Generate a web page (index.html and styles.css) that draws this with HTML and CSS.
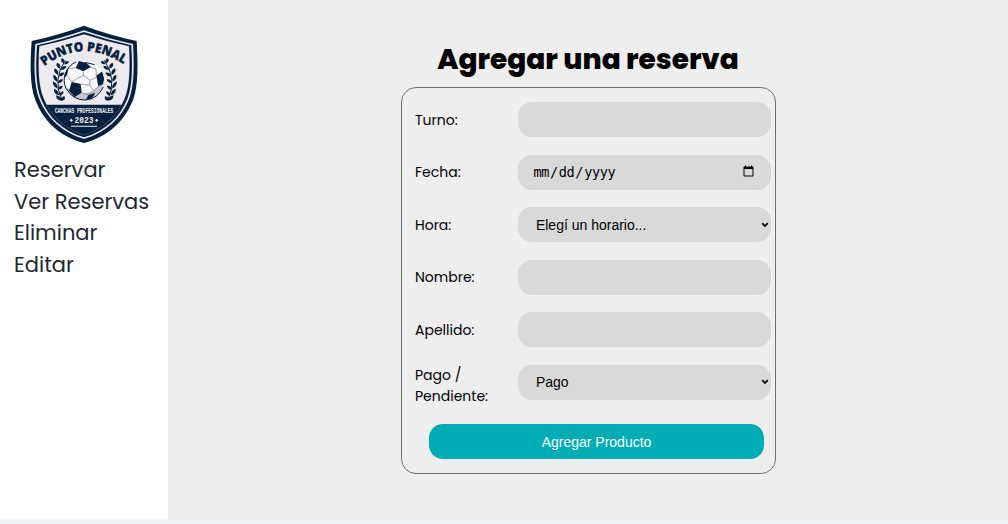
FILE: index.html
```html
<!DOCTYPE html>
<html lang="es">
<head>
<meta charset="utf-8">
<title>Punto Penal</title>
<link rel="stylesheet" href="styles.css">
</head>
<body>
<div class="layout">
  <aside class="sidebar">
    <svg class="logo" viewBox="0 0 390 405" role="img" aria-label="Punto Penal">
      <defs>
        <path id="name-arc" d="M73 153Q192 64 318 153"/>
        <clipPath id="ball-clip"><circle cx="192" cy="196" r="60"/></clipPath>
        <clipPath id="inner-clip"><path d="M192 58Q257 79 327 94C330 150 331 214 313 253C290 307 249 342 192 360C135 342 94 307 72 253C54 214 54 150 58 94Q128 79 192 58Z"/></clipPath>
        <g id="laurel" fill="#06203f">
          <path d="M137 136Q97 193 127 256" fill="none" stroke="#06203f" stroke-width="3"/>
          <path d="M132 145Q119 140 127 130Q138 134 132 145ZM134 148Q136 136 147 138Q147 149 134 148Z"/>
          <path d="M121 161Q106 154 112 143Q126 147 121 161ZM123 165Q127 151 140 153Q138 165 123 165Z"/>
          <path d="M115 180Q99 171 105 160Q119 166 115 180ZM116 184Q121 170 134 173Q131 185 116 184Z"/>
          <path d="M112 200Q96 190 102 179Q116 186 112 200ZM113 204Q118 190 130 193Q128 205 113 204Z"/>
          <path d="M113 221Q97 212 100 199Q116 207 113 221ZM114 224Q117 211 129 212Q128 224 114 224Z"/>
          <path d="M118 241Q101 236 103 221Q118 226 118 241ZM119 242Q119 230 131 229Q133 240 119 242Z"/>
          <path d="M127 257Q110 257 109 241Q124 244 127 257ZM127 257Q122 246 134 243Q140 255 127 257Z"/>
        </g>
      </defs>
      <path fill="#06203f" d="M192 32Q263 59 350 78C353 136 357 208 339 255C314 318 265 365 192 384C119 365 70 318 46 255C28 208 31 136 35 78Q122 59 192 32Z"/>
      <path fill="#efedf0" d="M192 46Q260 70 339 87C342 147 344 208 327 253C304 310 258 353 192 372C126 353 81 310 58 253C41 208 42 147 46 87Q125 70 192 46Z"/>
      <path fill="#06203f" d="M192 51Q259 74 334 91C337 149 339 209 322 252C299 308 256 348 192 367C128 348 86 308 63 252C46 209 47 149 51 91Q126 74 192 51Z"/>
      <path fill="#eceaee" d="M192 58Q257 79 327 94C330 150 331 214 313 253C290 307 249 342 192 360C135 342 94 307 72 253C54 214 54 150 58 94Q128 79 192 58Z"/>
      <path fill="#06203f" clip-path="url(#inner-clip)" d="M40 269H340V375H40Z"/>
      <text class="logo-name"><textPath href="#name-arc" textLength="256" lengthAdjust="spacingAndGlyphs">PUNTO PENAL</textPath></text>
      <use href="#laurel" transform="translate(-1 0)"/>
      <use href="#laurel" transform="translate(390 0) scale(-1 1)"/>
      <g clip-path="url(#ball-clip)">
        <circle cx="192" cy="196" r="60" fill="#f8f7f9"/>
        <path fill="#c9c5cd" d="M131 206Q158 245 207 232Q239 225 253 183V260H130Z"/>
        <g fill="#06203f">
          <path d="M177 138L199 144L213 156L190 169L167 159Z"/>
          <path d="M155 201L182 207L185 233L164 246L147 227Z"/>
          <path d="M229 182L247 169L255 178L249 207L235 214Z"/>
          <path d="M129 176L139 160L146 159L141 181L130 192ZM205 240L226 233L215 252L197 256Z"/>
        </g>
        <path fill="none" stroke="#6f7787" stroke-width="2" d="M190 169V181L210 196L229 187M190 181L172 190L155 201M167 159L148 160M141 181L156 202M182 207L209 211L210 196M209 211L221 226L237 214M211 156L228 162L229 184M185 233L205 240L221 226M147 227L132 218"/>
      </g>
      <path fill="none" stroke="#06203f" stroke-width="3" d="M168 141A59 59 0 0 0 138 220Q160 256 196 255Q233 252 250 216M195 142L224 149"/>
      <text class="logo-caption" x="192" y="293" textLength="176" lengthAdjust="spacingAndGlyphs">CANCHAS PROFESIONALES</text>
      <text class="logo-year" x="192" y="325" textLength="57" lengthAdjust="spacingAndGlyphs">2023</text>
      <path fill="#efedf0" d="M154 311L159 316L154 321L149 316ZM230 311L235 316L230 321L225 316ZM153 332H231V335H153Z"/>
    </svg>
    <nav class="menu">
      <a class="menu-link" href="#">Reservar</a>
      <a class="menu-link" href="#">Ver Reservas</a>
      <a class="menu-link" href="#">Eliminar</a>
      <a class="menu-link" href="#">Editar</a>
    </nav>
  </aside>
  <main class="content">
    <h1 class="title">Agregar una reserva</h1>
    <form class="booking">
      <div class="row"><label class="label" for="turno">Turno:</label><input class="field" id="turno" type="text"></div>
      <div class="row"><label class="label" for="fecha">Fecha:</label><input class="field field-date" id="fecha" type="date"></div>
      <div class="row"><label class="label" for="hora">Hora:</label><select class="field field-select" id="hora"><option>Elegí un horario...</option></select></div>
      <div class="row"><label class="label" for="nombre">Nombre:</label><input class="field" id="nombre" type="text"></div>
      <div class="row"><label class="label" for="apellido">Apellido:</label><input class="field" id="apellido" type="text"></div>
      <div class="row row-tall"><label class="label" for="pago">Pago / Pendiente:</label><select class="field field-select" id="pago"><option>Pago</option></select></div>
      <button class="submit" type="button">Agregar Producto</button>
    </form>
  </main>
</div>
</body>
</html>
```
FILE: styles.css
```css
* { box-sizing: border-box; }
body {
  margin: 0;
  height: 524px;
  overflow: hidden;
  background: #ebf5f6;
  font-family: Poppins, Inter, "Open Sans", sans-serif;
}
.layout { display: flex; height: 519px; }
.sidebar { width: 168px; padding-top: 15px; background: #fff; }
.logo { display: block; width: 130px; height: 135px; margin-left: 20px; }
.logo-name { font: 800 39px "Open Sans", sans-serif; fill: #06203f; stroke: #06203f; stroke-width: 1px; }
.logo-caption { font: 700 19px "Liberation Mono", monospace; fill: #efedf0; text-anchor: middle; }
.logo-year { font: 700 27px "Liberation Mono", monospace; fill: #efedf0; text-anchor: middle; }
.menu { display: flex; flex-direction: column; padding: 4px 0 0 14px; }
.menu-link {
  font-size: 21px;
  font-weight: 400;
  line-height: 31.6px;
  color: #222831;
  text-decoration: none;
  white-space: nowrap;
}
.content {
  flex: 1;
  display: flex;
  flex-direction: column;
  align-items: center;
  padding: 38px 0 0;
  background: #eee;
}
.title { margin: 0; font-size: 28px; font-weight: 800; line-height: 44px; }
.booking {
  width: 375px;
  height: 387px;
  margin: 5px 0 0;
  padding: 14px 3px 0 13.5px;
  border: 1px solid #6c6e76;
  border-radius: 15px;
}
.row { display: flex; align-items: center; height: 35px; margin-bottom: 17.5px; }
.label { width: 103.4px; padding: 1px 18px 0 0; font-size: 14px; font-weight: 400; line-height: 21px; color: #000; }
.row-tall .label { padding-top: 7px; }
.field {
  width: 253px;
  height: 35px;
  padding: 0 14px;
  border: 0;
  border-radius: 14px;
  background: #d9d9d9;
  color: #000;
  font: 14px "Liberation Sans", Arial, sans-serif;
}
.field-date { font: 13.6px "DejaVu Sans Mono", monospace; letter-spacing: -0.4px; }
.field-select {
  appearance: none;
  padding: 0 0 0 17.5px;
  background: #d9d9d9 url("data:image/svg+xml,%3Csvg xmlns='http://www.w3.org/2000/svg' width='8' height='6' viewBox='0 0 8 6'%3E%3Cpath d='M1.2 1.2 4 4 6.8 1.2' fill='none' stroke='%23000' stroke-width='1.7'/%3E%3C/svg%3E") no-repeat right 2px center;
}
.submit {
  display: block;
  width: 335px;
  height: 35px;
  margin: 24px 0 0 14px;
  padding-top: 2px;
  border: 0;
  border-radius: 14px;
  background: #00adb5;
  color: #fff;
  font: 14px "Liberation Sans", Arial, sans-serif;
}
```
